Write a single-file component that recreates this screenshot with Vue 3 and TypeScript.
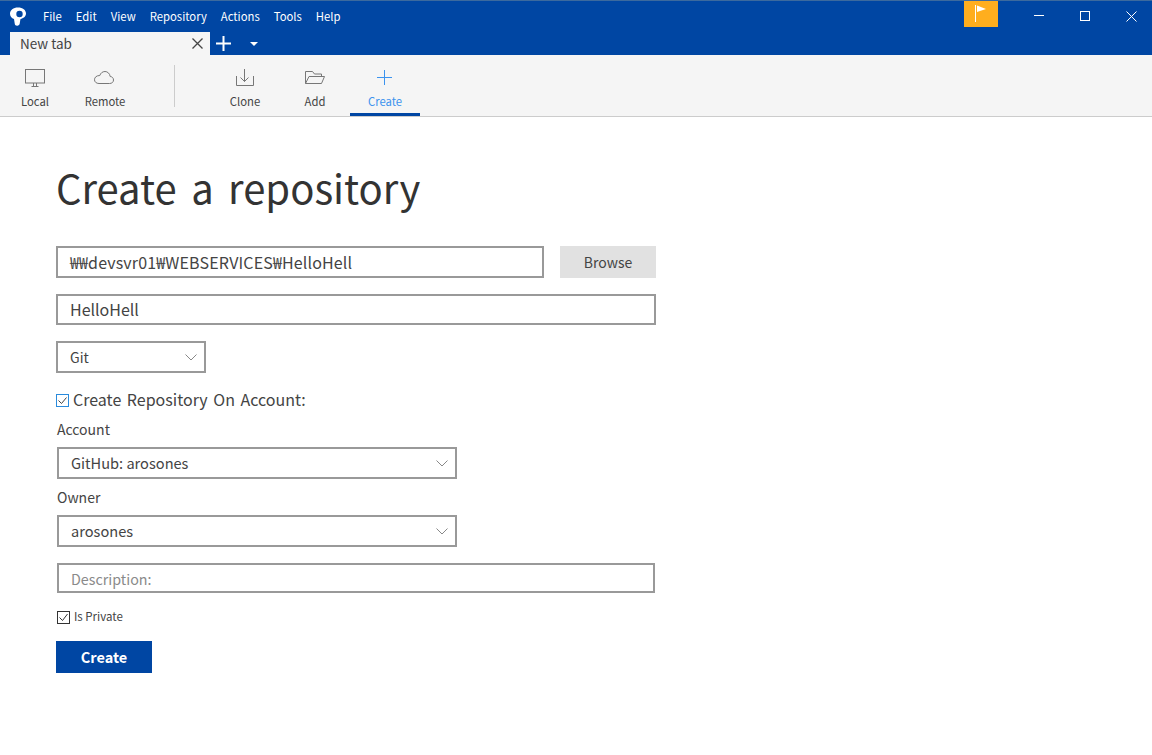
<script setup lang="ts">
const menus: string[] = ['File', 'Edit', 'View', 'Repository', 'Actions', 'Tools', 'Help']
</script>

<template>
  <div class="app">
    <header class="titlebar">
      <div class="top-row">
        <svg class="logo" width="18" height="19" viewBox="0 0 18 19">
          <path fill="#fff" fill-rule="evenodd" d="M9 .5C4.300.5 1 3.200 1 6.800c0 2.500 1.600 4.300 4 5.300l.8 4.900c.2 1 1 1.700 2.200 1.800l.3-.1c1.300-.1 2.200-.9 2.400-1.900l.7-4.600c2.900-.9 5.600-2.700 5.600-5.700C17 3.100 13.700.5 9 .5zM10.500 3.800a3.200 3.200 0 1 1 0 6.400a3.200 3.200 0 0 1 0-6.400z" />
        </svg>
        <nav class="menu">
          <span v-for="m in menus" :key="m">{{ m }}</span>
        </nav>
        <div class="flag">
          <svg width="14" height="20" viewBox="0 0 14 20"><path d="M1.500 2v17" stroke="#fff" fill="none" /><path d="M3 2.500l9 3.500-9 3z" fill="#fff" /></svg>
        </div>
        <div class="winbtns">
          <svg width="11" height="11" viewBox="0 0 11 11"><path d="M0 4.500h10" stroke="#fff" /></svg>
          <svg width="11" height="11" viewBox="0 0 11 11"><rect x=".5" y=".5" width="9" height="9" fill="none" stroke="#fff" /></svg>
          <svg width="11" height="11" viewBox="0 0 11 11"><path d="M.5.500l10 10M10.500.500l-10 10" stroke="#fff" /></svg>
        </div>
      </div>
      <div class="tab-row">
        <div class="tab">
          <span class="tab-label">New tab</span>
          <svg width="11" height="11" viewBox="0 0 11 11"><path d="M.5.500l10 10M10.500.500l-10 10" stroke="#444" stroke-width="1.300" /></svg>
        </div>
        <svg class="plus" width="15" height="15" viewBox="0 0 15 15"><path d="M7.500 0v15M0 7.500h15" stroke="#fff" stroke-width="2" /></svg>
        <span class="caret"></span>
      </div>
    </header>

    <div class="toolbar">
      <button class="tool t-local">
        <svg width="24" height="20" viewBox="0 0 24 20" fill="none" stroke="#777"><rect x="2.500" y="1.500" width="19" height="13.500" /><path d="M8.500 18.500h7M10.500 15v3.500M13.500 15v3.500" /></svg>
        <span>Local</span>
      </button>
      <button class="tool t-remote">
        <svg width="22" height="20" viewBox="0 0 22 20" fill="none" stroke="#777"><path transform="translate(-1 0)" d="M6 15.500h10.500c2.500 0 4-1.500 4-3.500 0-2-1.400-3.400-3.300-3.500C16.800 5.500 14.500 3.500 12 3.500c-2.500 0-4.500 1.700-5.200 4C3.200 7.500 1.500 9.500 1.500 11.800c0 2 1.800 3.700 4.500 3.700z" /></svg>
        <span>Remote</span>
      </button>
      <div class="sep"></div>
      <button class="tool t-clone">
        <svg width="20" height="20" viewBox="0 0 20 20" fill="none" stroke="#777"><path d="M1.500 8v9.500h17V8M9.500 1v12.500M5.500 9.500l4 4 4-4" /></svg>
        <span>Clone</span>
      </button>
      <button class="tool t-add">
        <svg width="22" height="20" viewBox="0 0 22 20" fill="none" stroke="#777"><path d="M1.500 15.500V3.500h7l2 2.500h7v2.500M1.500 15.500l3.500-7h15.500l-3 7z" /></svg>
        <span>Add</span>
      </button>
      <button class="tool t-create">
        <svg width="20" height="20" viewBox="0 0 20 20" fill="none" stroke="#3c93ee"><path d="M9.500 2v15M2 9.500h15" /></svg>
        <span>Create</span>
      </button>
    </div>

    <main class="content">
      <h1>Create a repository</h1>

      <div class="row">
        <div class="field path">₩₩devsvr01₩WEBSERVICES₩HelloHell</div>
        <button class="browse">Browse</button>
      </div>
      <div class="field name">HelloHell</div>

      <div class="field select git">
        <span>Git</span>
        <svg width="12" height="7" viewBox="0 0 12 7" fill="none" stroke="#888"><path d="M.5.500l5.500 5.500 5.500-5.500" /></svg>
      </div>

      <label class="check-main">
        <span class="box blue">
          <svg width="13" height="13" viewBox="0 0 13 13" fill="none" stroke="#444"><path d="M2.500 6.500l3 3 5-6" /></svg>
        </span>
        <span class="lift">Create Repository On Account:</span>
      </label>

      <div class="label">Account</div>
      <div class="field select wide">
        <span class="lift">GitHub: arosones</span>
        <svg width="12" height="7" viewBox="0 0 12 7" fill="none" stroke="#888"><path d="M.5.500l5.500 5.500 5.500-5.500" /></svg>
      </div>
      <div class="label">Owner</div>
      <div class="field select wide">
        <span class="lift">arosones</span>
        <svg width="12" height="7" viewBox="0 0 12 7" fill="none" stroke="#888"><path d="M.5.500l5.500 5.500 5.500-5.500" /></svg>
      </div>

      <div class="field desc">Description:</div>

      <label class="check-private">
        <span class="box dark">
          <svg width="13" height="13" viewBox="0 0 13 13" fill="none" stroke="#333"><path d="M2.500 6.500l3 3 5-6.500" /></svg>
        </span>
        <span class="lift">Is Private</span>
      </label>

      <button class="create">Create</button>
    </main>
  </div>
</template>

<style>
html, body { margin: 0; background: #fff; }
</style>

<style scoped>
.app {
  width: 1152px;
  height: 755px;
  overflow: hidden;
  background: #fff;
  font-family: "Noto Sans CJK KR", "Noto Sans", sans-serif;
  color: #333;
}
.titlebar {
  height: 55px;
  box-sizing: border-box;
  background: #0046a3;
  border-top: 1px solid #3c6a9e;
  display: flex;
  flex-direction: column;
}
.top-row { height: 31px; display: flex; align-items: flex-start; }
.logo { margin: 6px 0 0 9px; flex: none; }
.menu {
  display: flex;
  gap: 14px;
  margin-left: 16px;
  font-size: 11.3px;
  line-height: 30px;
  color: #fff;
}
.flag {
  margin-left: auto;
  width: 34px;
  height: 26px;
  background: #ffae1e;
  display: flex;
  justify-content: center;
  padding-top: 2px;
  box-sizing: border-box;
}
.winbtns {
  width: 154px;
  display: flex;
  gap: 35px;
  padding: 10px 0 0 36px;
  box-sizing: border-box;
}
.tab-row { height: 23px; display: flex; align-items: center; }
.tab {
  width: 200px;
  height: 23px;
  margin-left: 10px;
  background: #f5f5f5;
  color: #444;
  font-size: 13.5px;
  display: flex;
  align-items: center;
  justify-content: space-between;
  padding: 0 7px 0 10px;
  box-sizing: border-box;
}
.tab-label { margin-bottom: 2px; }
.plus { margin-left: 6px; }
.caret {
  margin-left: 19px;
  border-left: 4px solid transparent;
  border-right: 4px solid transparent;
  border-top: 4px solid #fff;
}
.toolbar {
  height: 62px;
  box-sizing: border-box;
  background: #f5f5f5;
  border-bottom: 1px solid #ccc;
  display: flex;
}
.tool {
  border: 0;
  padding: 13px 0 0;
  background: none;
  font: inherit;
  font-size: 11.3px;
  color: #444;
  display: flex;
  flex-direction: column;
  align-items: center;
  width: 70px;
  height: 61px;
  box-sizing: border-box;
}
.tool span { margin-top: 4px; line-height: 18px; }
.sep { width: 1px; height: 42px; margin: 10px 35px 0 0; background: #ccc; }
.t-remote { margin-right: 34px; }
.t-create { color: #3c93ee; border-bottom: 3px solid #0046a3; }
.content { padding: 0 0 0 56px; }
h1 {
  margin: 0;
  padding-top: 40px;
  font-size: 40px;
  font-weight: 400;
  line-height: 60px;
  height: 89px;
  word-spacing: 5.5px;
  color: #333;
}
.row { display: flex; gap: 16px; }
.field {
  box-sizing: border-box;
  border: 2px solid #999;
  background: #fff;
  font-size: 15px;
  padding: 0 12px;
  display: flex;
  align-items: center;
  color: #444;
}
.lift { margin-bottom: 2px; }
.path { width: 488px; height: 32px; font-size: 16px; letter-spacing: .15px; }
.browse {
  width: 96px;
  height: 32px;
  border: 0;
  background: #e1e1e1;
  font: inherit;
  font-size: 14px;
  color: #444;
}
.name { width: 600px; height: 31px; margin-top: 16px; padding-bottom: 2px; font-size: 16px; }
.select { justify-content: space-between; }
.git { width: 150px; height: 32px; margin-top: 16px; font-size: 14px; padding-right: 7px; }
.check-main {
  display: flex;
  align-items: center;
  gap: 4px;
  margin-top: 16px;
  height: 22px;
  font-size: 16px;
  word-spacing: 2px;
  color: #444;
}
.box { width: 13px; height: 13px; box-sizing: border-box; display: inline-flex; flex: none; background: #fff; position: relative; }
.box svg { margin: -1px; flex: none; }
.blue { border: 1px solid #2a8bdc; }
.dark { border: 1px solid #333; }
.label { margin: 9px 0 9px 1px; font-size: 14px; height: 18px; line-height: 18px; color: #444; }
.wide { width: 400px; height: 32px; margin-left: 1px; font-size: 14.6px; padding-right: 7px; }
.desc { width: 598px; height: 30px; margin: 16px 0 0 1px; font-size: 14.3px; color: #8a8a8a; }
.check-private {
  display: flex;
  align-items: center;
  gap: 4px;
  height: 16px;
  margin: 16px 0 0 1px;
  font-size: 11.5px;
  color: #444;
}
.create {
  display: block;
  width: 96px;
  height: 32px;
  margin-top: 16px;
  padding: 0 0 2px;
  border: 0;
  background: #0046a3;
  color: #fff;
  font: inherit;
  font-size: 14.5px;
  font-weight: 700;
}
</style>
